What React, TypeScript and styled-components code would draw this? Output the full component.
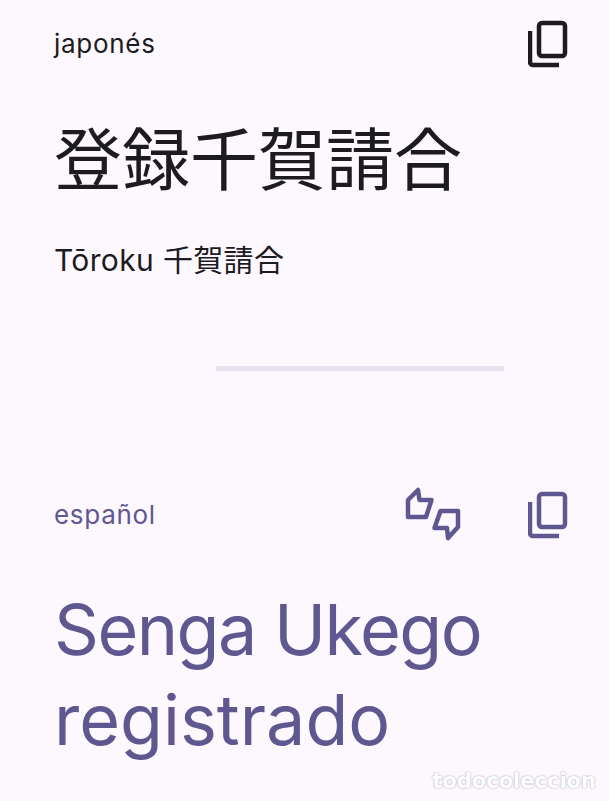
import React from "react";
import styled, { createGlobalStyle } from "styled-components";

const GlobalStyle = createGlobalStyle`
  html, body {
    margin: 0;
    padding: 0;
    background-color: #fdf8fe;
  }
`;

const FONT = `"Inter", "Noto Sans CJK JP", sans-serif`;

const CopyIcon = () => (
  <svg width="40" height="48" viewBox="0 0 40 48" fill="none" stroke="currentColor" strokeWidth="4.5">
    <rect x="11" y="3" width="26" height="33" rx="3" />
    <path d="M2 11V42a3 3 0 0 0 3 3H31" />
  </svg>
);

const SwapThumbsIcon = () => (
  <svg width="56" height="56" viewBox="0 0 56 56" fill="none" stroke="currentColor" strokeWidth="4.5" strokeLinejoin="round">
    <path d="M3 14L13 4L14.5 14H26.5L21 31H3Z" />
    <path d="M53 25V41L43 52L42 42H29.5L35.5 25Z" />
  </svg>
);

const App = () => {
  return (
    <Page>
      <GlobalStyle />
      <SourceSection>
        <LabelRow>
          <Label>japonés</Label>
          <IconGroup>
            <CopyIcon />
          </IconGroup>
        </LabelRow>
        <SourceText lang="ja">登録千賀請合</SourceText>
        <Reading lang="ja">Tōroku 千賀請合</Reading>
      </SourceSection>

      <Divider />

      <TargetSection>
        <LabelRow>
          <Label>español</Label>
          <IconGroup>
            <SwapButton>
              <SwapThumbsIcon />
            </SwapButton>
            <CopyIcon />
          </IconGroup>
        </LabelRow>
        <TargetText>
          <TitleLine $tight>Senga Ukego</TitleLine>
          <TitleLine>registrado</TitleLine>
        </TargetText>
      </TargetSection>

      <Watermark>todocoleccion</Watermark>
    </Page>
  );
};

const Page = styled.div`
  position: relative;
  width: 609px;
  height: 801px;
  overflow: hidden;
  background-color: #fdf8fe;
  font-family: ${FONT};
  box-sizing: border-box;
  padding: 20px 41px 0 54px;
`;

const SourceSection = styled.section`
  color: #1c1b1f;
`;

const TargetSection = styled.section`
  color: #5f5790;
  margin-top: 120px;
`;

const LabelRow = styled.div`
  display: flex;
  align-items: flex-start;
  justify-content: space-between;
  height: 48px;
`;

const Label = styled.span`
  font-size: 26px;
  line-height: 48px;
  letter-spacing: 0.7px;
`;

const IconGroup = styled.div`
  display: flex;
  align-items: flex-start;
  gap: 67px;
`;

const SwapButton = styled.span`
  display: block;
  margin-top: -5px;
`;

const SourceText = styled.h1`
  margin: 47px 0 0;
  font-size: 68px;
  font-weight: 400;
  line-height: 90px;
`;

const Reading = styled.p`
  margin: 33px 0 0;
  font-size: 30px;
  line-height: 44px;
  letter-spacing: 0.35px;
`;

const Divider = styled.div`
  width: 288px;
  height: 5px;
  margin: 84px 0 0 162px;
  background-color: #e7e4f1;
`;

const TargetText = styled.h2`
  margin: 46px 0 0;
  font-size: 70px;
  font-weight: 400;
  line-height: 90px;
`;

const TitleLine = styled.span<{ $tight?: boolean }>`
  display: block;
  letter-spacing: ${(p) => (p.$tight ? "-1.5px" : "0")};
`;

const Watermark = styled.div`
  position: absolute;
  right: 13px;
  bottom: 8px;
  font-family: "DejaVu Sans", sans-serif;
  font-size: 21px;
  font-weight: 700;
  color: #fff;
  text-shadow: 0 0 2px #b5b3ba, 0 0 1px #b5b3ba;
`;

export default App;
